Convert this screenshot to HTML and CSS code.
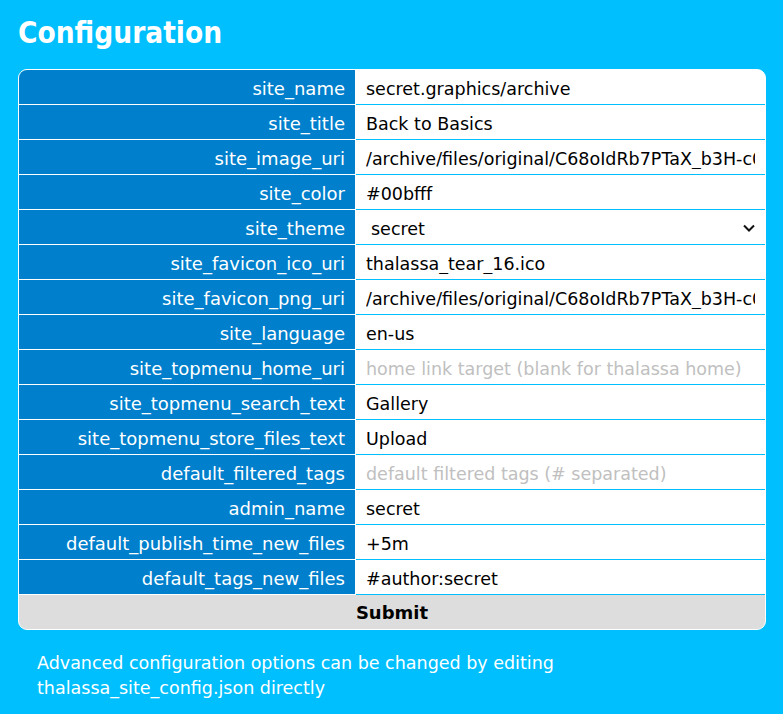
FILE: index.html
```html
<!DOCTYPE html>
<html>
<head>
<meta charset="utf-8">
<link rel="stylesheet" href="styles.css">
</head>
<body>
<h1 class="title">Configuration</h1>
<form class="config">
  <div class="row"><label class="key">site_name</label><div class="val"><input class="field" type="text" value="secret.graphics/archive"></div></div>
  <div class="row"><label class="key">site_title</label><div class="val"><input class="field" type="text" value="Back to Basics"></div></div>
  <div class="row"><label class="key">site_image_uri</label><div class="val"><input class="field" type="text" value="/archive/files/original/C68oIdRb7PTaX_b3H-c0.png"></div></div>
  <div class="row"><label class="key">site_color</label><div class="val"><input class="field" type="text" value="#00bfff"></div></div>
  <div class="row"><label class="key">site_theme</label><div class="val"><div class="select"><span>secret</span><svg class="chev" width="12" height="8" viewBox="0 0 12 8"><path d="M1 1.5 L6 6.5 L11 1.5" fill="none" stroke="#111" stroke-width="2"/></svg></div></div></div>
  <div class="row"><label class="key">site_favicon_ico_uri</label><div class="val"><input class="field" type="text" value="thalassa_tear_16.ico"></div></div>
  <div class="row"><label class="key">site_favicon_png_uri</label><div class="val"><input class="field" type="text" value="/archive/files/original/C68oIdRb7PTaX_b3H-c0.png"></div></div>
  <div class="row"><label class="key">site_language</label><div class="val"><input class="field" type="text" value="en-us"></div></div>
  <div class="row"><label class="key">site_topmenu_home_uri</label><div class="val"><input class="field" type="text" placeholder="home link target (blank for thalassa home)"></div></div>
  <div class="row"><label class="key">site_topmenu_search_text</label><div class="val"><input class="field" type="text" value="Gallery"></div></div>
  <div class="row"><label class="key">site_topmenu_store_files_text</label><div class="val"><input class="field" type="text" value="Upload"></div></div>
  <div class="row"><label class="key">default_filtered_tags</label><div class="val"><input class="field" type="text" placeholder="default filtered tags (# separated)"></div></div>
  <div class="row"><label class="key">admin_name</label><div class="val"><input class="field" type="text" value="secret"></div></div>
  <div class="row"><label class="key">default_publish_time_new_files</label><div class="val"><input class="field" type="text" value="+5m"></div></div>
  <div class="row"><label class="key">default_tags_new_files</label><div class="val"><input class="field" type="text" value="#author:secret"></div></div>
  <button class="submit" type="button">Submit</button>
</form>
<p class="note">Advanced configuration options can be changed by editing<br>thalassa_site_config.json directly</p>
</body>
</html>
```
FILE: styles.css
```css
html, body {
  margin: 0;
  padding: 0;
  background: #00bfff;
}
body {
  padding: 0 17px 0 18px;
  font-family: "DejaVu Sans", sans-serif;
  color: #fff;
}
.title {
  margin: 0;
  padding-top: 15px;
  height: 69px;
  box-sizing: border-box;
  font-family: "DejaVu Sans Condensed", "DejaVu Sans", sans-serif;
  font-stretch: condensed;
  font-size: 29.5px;
  line-height: 36px;
  font-weight: bold;
  color: #fff;
}
.config {
  display: flex;
  flex-direction: column;
  border: 1px solid #fff;
  border-radius: 9px;
  overflow: hidden;
  background: #fff;
}
.row {
  display: grid;
  grid-template-columns: 336px 1fr;
  column-gap: 1px;
  height: 35px;
}
.key {
  box-sizing: border-box;
  background: #0080cc;
  color: #fff;
  text-align: right;
  padding: 3px 10px 0 0;
  font-size: 18px;
  line-height: 31px;
  height: 35px;
  border-bottom: 1px solid #fff;
}
.val {
  box-sizing: border-box;
  border-bottom: 1px solid #00bfff;
  height: 35px;
  display: flex;
}
.field {
  box-sizing: border-box;
  border: 0;
  outline: 0;
  margin: 0;
  padding: 3px 10px 0;
  width: 100%;
  font-family: inherit;
  font-size: 17.5px;
  color: #000;
  background: #fff;
}
.field::placeholder {
  color: #c0c0c0;
}
.select {
  flex: 1;
  display: flex;
  align-items: center;
  justify-content: space-between;
  padding: 3px 10px 0 15px;
  font-size: 17.5px;
  color: #000;
}
.chev {
  display: block;
  margin-top: -2px;
}
.submit {
  height: 34px;
  border: 0;
  margin: 0;
  padding-top: 2px;
  background: #dddddd;
  font-family: inherit;
  font-weight: bold;
  font-size: 18px;
  color: #000;
}
.note {
  margin: 21px 0 0 19px;
  font-size: 17.5px;
  line-height: 25px;
  color: #fff;
}
```
